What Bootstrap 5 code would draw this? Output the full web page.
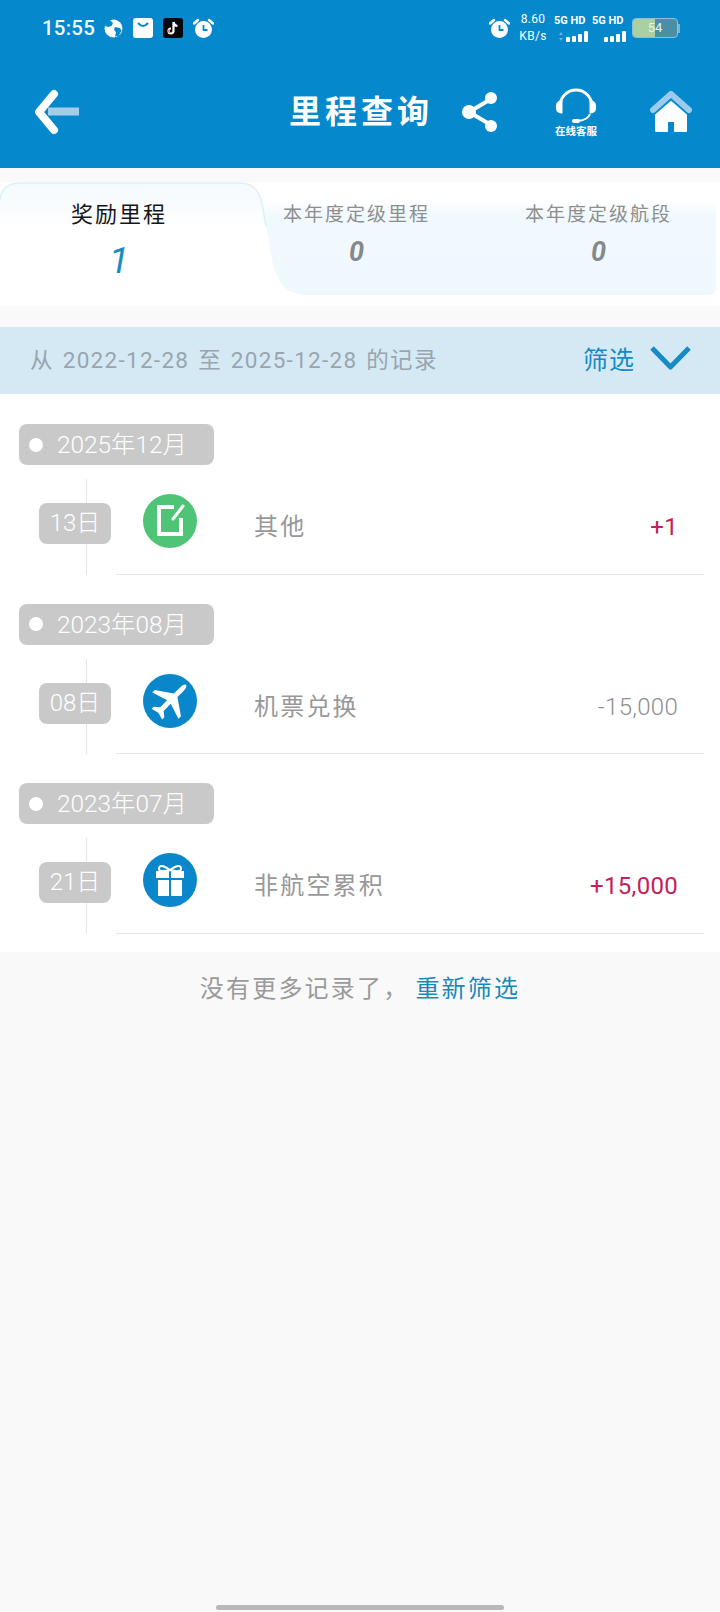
<!DOCTYPE html>
<html lang="zh-CN">
<head>
  <meta charset="UTF-8">
  <meta name="viewport" content="width=device-width, initial-scale=1.0">
  <title>里程查询</title>
  <link href="https://cdn.jsdelivr.net/npm/bootstrap@5.3.0/dist/css/bootstrap.min.css" rel="stylesheet">
  <style>
    body { background: #f9f9f9; font-family: Roboto, "Noto Sans CJK SC", sans-serif; color: #999; }
    .page-wrap { min-height: 1612px; }

    /* 顶部 */
    .top-head { background: #0588cc; height: 168px; color: #fff; }
    .status-row { height: 56px; padding: 0 40px 0 42px; }
    .clock-txt { font-size: 20.5px; font-weight: 500; letter-spacing: .2px; line-height: 1; opacity: .95; margin-right: 9px; }
    .app-gap { margin-left: 10px; }
    .alarm-r { margin-right: -2px; }
    .net-speed { font-size: 12px; line-height: 17px; width: 30px; margin: 0 6px 0 10px; text-align: center; letter-spacing: .3px; }
    .sig-txt { font-size: 11px; font-weight: 700; line-height: 12px; white-space: nowrap; }
    .batt-box { width: 46px; height: 20px; border: 1px solid #8cc0dc; border-radius: 4px; background: #4b8fa6; overflow: hidden; margin-left: 6px; }
    .batt-fill { height: 100%; background: #a9cfa2; }
    .batt-num { font-size: 13px; line-height: 18px; color: #e8f3ee; left: 0; right: 0; top: 0; text-align: center; }
    .batt-nub { width: 2px; height: 9px; background: #7cb3d0; }
    .tool-row { height: 112px; padding: 0 28px 0 34px; }
    .page-title { font-size: 32px; font-weight: 700; letter-spacing: 4px; line-height: 1; margin-left: 209px; }
    .share-ico { margin-left: 28px; }
    .kefu-box { margin-left: 56px; }
    .kefu-txt { font-size: 10.5px; font-weight: 700; line-height: 11px; white-space: nowrap; margin-top: 2px; }

    /* 三个 tab */
    .tab-strip { margin-top: 14px; background: #fff; height: 124px; }
    .tab-strip-bg { left: 0; top: 0; }
    .tab-a { width: 238px; }
    .tab-b { width: 237px; }
    .tab-c { width: 245px; padding-left: 2px; }
    .tab-name { font-size: 19px; letter-spacing: 2px; line-height: 26px; color: #8e8e8e; padding-top: 20px; }
    .tab-num { font-size: 27px; font-style: italic; font-weight: 700; line-height: 34px; color: #85898c; margin-top: 7px; }
    .tab-a .tab-name { font-size: 22px; color: #161616; }
    .tab-a .tab-num { font-size: 37px; font-weight: 400; color: #178cc4; line-height: 42px; margin-top: 12px; }

    /* 筛选条 */
    .filter-bar { margin-top: 21px; height: 67px; background: #d5e9f5; padding: 0 29px 0 30px; }
    .range-txt { font-size: 22.5px; color: #98a5ad; letter-spacing: 1.3px; word-spacing: 2px; }
    .filter-btn { font-size: 25px; color: #178cc4; letter-spacing: 1px; text-decoration: none; margin-right: 15px; }
    .filter-arrow { margin-bottom: 6px; }

    /* 记录 */
    .rec-list { background: #fff; padding: 30px 16px 18px 19px; }
    .month-tag { width: 195px; height: 41px; background: #c9c9c9; border-radius: 8px; color: #fff; font-size: 24.4px; line-height: 41px; font-weight: 300; padding-left: 10px; margin-top: 29px; }
    .month-tag:first-child { margin-top: 0; }
    .month-dot { width: 14px; height: 14px; border-radius: 50%; background: #fff; margin-right: 14px; }
    .rec-row { height: 95.5px; margin: 14px 0 0 97px; border-bottom: 1px solid #e6e6e6; padding-right: 26px; }
    .rec-line { left: -30px; top: 0; bottom: -1px; width: 1px; background: #e6e6e6; }
    .day-tag { width: 72px; height: 41px; background: #c9c9c9; border-radius: 8px; color: #fff; font-size: 24px; font-weight: 300; line-height: 41px; text-align: center; margin: 24px 0 0 -77px; z-index: 1; }
    .rec-icon { width: 54px; height: 54px; margin: 15px 0 0 32px; }
    .rec-name { font-size: 24px; letter-spacing: 2.2px; color: #989898; margin: 30px 0 0 57px; line-height: 36px; }
    .rec-amt { font-size: 24px; font-weight: 300; color: #8f8f8f; letter-spacing: .3px; margin: 30px 0 0 auto; line-height: 36px; }
    .rec-amt.plus { color: #c2215a; font-weight: 400; }

    .end-note { font-size: 24px; letter-spacing: 2.2px; line-height: 34px; margin-top: 20px; color: #9a9a9a; }
    .end-note a { color: #178ab8; text-decoration: none; margin-left: 6px; }
    .home-bar { width: 288px; height: 5px; background: #b9b9b9; border-radius: 3px; margin: auto auto 2px; }
  </style>
</head>
<body>
  <div class="page-wrap d-flex flex-column">

    <div class="top-head">
      <div class="status-row d-flex align-items-center">
        <span class="clock-txt">15:55</span>
        <svg width="19" height="19" viewBox="0 0 19 19"><circle cx="9.5" cy="9.5" r="9" fill="#fff"/><path d="M6 1 9 4 7.500 7 4 8 1 7 2 3zM11 8l5 1 1.500 3-3 5-3.500 .5 1-4-2-3z" fill="#0588cc"/></svg>
        <svg class="app-gap" width="20" height="20" viewBox="0 0 20 20"><rect width="20" height="20" rx="3" fill="#fff"/><path d="M5.500 5.500q4.500 5 9 0" fill="none" stroke="#0588cc" stroke-width="2" stroke-linecap="round"/></svg>
        <svg class="app-gap" width="20" height="20" viewBox="0 0 20 20"><rect width="20" height="20" rx="3" fill="#06060c"/><path d="M10.500 4v9a2.500 2.500 0 1 1-2.500-2.500M10.500 4q.5 3.500 4 4" fill="none" stroke="#fff" stroke-width="2.200"/><path d="M6.200 11.500a2.500 2.500 0 0 0 .3 3.500" fill="none" stroke="#e8304f" stroke-width="1"/></svg>
        <svg class="app-gap" width="21" height="21" viewBox="0 0 21 21"><circle cx="10.500" cy="11.500" r="8.500" fill="#fff"/><path d="M1 5.500 5 2M20 5.500 16 2" stroke="#fff" stroke-width="2.400" stroke-linecap="round"/><path d="M10.500 7v5h4" fill="none" stroke="#0588cc" stroke-width="1.800"/></svg>

        <svg class="ms-auto alarm-r" width="21" height="21" viewBox="0 0 21 21"><circle cx="10.500" cy="11.500" r="8.500" fill="#fff"/><path d="M1 5.500 5 2M20 5.500 16 2" stroke="#fff" stroke-width="2.400" stroke-linecap="round"/><path d="M10.500 7v5h4" fill="none" stroke="#0588cc" stroke-width="1.800"/></svg>
        <div class="net-speed">8.60<br>KB/s</div>
        <div class="me-1">
          <div class="sig-txt">5G HD</div>
          <svg class="d-block mt-1 ms-1" width="30" height="11" viewBox="0 0 30 11"><g fill="#fff"><rect x="8" y="6" width="4" height="5" rx="1"/><rect x="14" y="5" width="4" height="6" rx="1"/><rect x="20" y="3" width="4" height="8" rx="1"/><rect x="26" y="0" width="4" height="11" rx="1"/></g><path d="M3 1 5 4H1zM3 10 5 7H1z" fill="#66b4de"/></svg>
        </div>
        <div>
          <div class="sig-txt">5G HD</div>
          <svg class="d-block mt-1 ms-1" width="30" height="11" viewBox="0 0 30 11"><g fill="#fff"><rect x="8" y="6" width="4" height="5" rx="1"/><rect x="14" y="5" width="4" height="6" rx="1"/><rect x="20" y="3" width="4" height="8" rx="1"/><rect x="26" y="0" width="4" height="11" rx="1"/></g></svg>
        </div>
        <div class="batt-box position-relative">
          <div class="batt-fill w-50"></div>
          <div class="batt-num position-absolute">54</div>
        </div>
        <div class="batt-nub"></div>
      </div>

      <div class="tool-row d-flex align-items-center">
        <svg width="46" height="46" viewBox="0 0 46 46"><rect x="14" y="18.500" width="31" height="8" fill="#a5cde8"/><path d="M20 5 5 23l15 18" fill="none" stroke="#fff" stroke-width="8" stroke-linecap="round" stroke-linejoin="round"/></svg>
        <div class="page-title">里程查询</div>
        <svg class="share-ico" width="38" height="42" viewBox="0 0 38 42"><path d="M30 8 8 21l22 13" fill="none" stroke="#fff" stroke-width="4"/><circle cx="30" cy="7" r="6" fill="#fff"/><circle cx="8" cy="21" r="7" fill="#fff"/><circle cx="30" cy="35" r="6" fill="#fff"/></svg>
        <div class="kefu-box d-flex flex-column align-items-center">
          <svg width="42" height="36" viewBox="0 0 42 36"><path d="M5 23V18a16 16 0 0 1 32 0v5" fill="none" stroke="#fff" stroke-width="3"/><path d="M6 12.500A5 5 0 0 0 1 17.500v3a5 5 0 0 0 5 5h1.500V12.500zM36 12.500a5 5 0 0 1 5 5v3a5 5 0 0 1-5 5h-1.500V12.500z" fill="#fff"/><path d="M35 26q-2 6-12 7" fill="none" stroke="#fff" stroke-width="2"/><rect x="17" y="31" width="8" height="4" rx="2" fill="#fff"/></svg>
          <div class="kefu-txt">在线客服</div>
        </div>
        <svg class="ms-auto" width="42" height="42" viewBox="0 0 42 42"><path d="M3 19 21 3l18 16" fill="none" stroke="#9ccbeb" stroke-width="6" stroke-linecap="round" stroke-linejoin="round"/><path d="M21 11 6 24v16h11V30h8v10h11V24z" fill="#fff" stroke="#fff" stroke-width="2" stroke-linejoin="round"/></svg>
      </div>
    </div>

    <div class="tab-strip d-flex position-relative">
      <svg class="tab-strip-bg position-absolute" width="720" height="124" viewBox="0 0 720 124">
        <defs>
          <linearGradient id="paleFade" x1="0" y1="0" x2="0" y2="1"><stop offset="0" stop-color="#ffffff"/><stop offset=".2" stop-color="#f0f9fe"/><stop offset="1" stop-color="#eff8fd"/></linearGradient>
          <linearGradient id="tabFade" x1="0" y1="0" x2="0" y2="1"><stop offset="0" stop-color="#f4fafe"/><stop offset=".4" stop-color="#ffffff"/></linearGradient>
        </defs>
        <path d="M250 16H708q8 0 8 8v81q0 8-8 8H306q-26 0-33-30z" fill="url(#paleFade)"/>
        <path d="M0 124V18Q2 1 20 1H240Q258 1 262 22L273 83Q280 113 306 113L320 124z" fill="url(#tabFade)"/>
        <path d="M0 18Q2 1 20 1H240Q258 1 262 22L266 44" fill="none" stroke="#deeff8" stroke-width="1.500"/>
      </svg>
      <div class="tab-a text-center position-relative">
        <div class="tab-name">奖励里程</div>
        <div class="tab-num">1</div>
      </div>
      <div class="tab-b text-center position-relative">
        <div class="tab-name">本年度定级里程</div>
        <div class="tab-num">0</div>
      </div>
      <div class="tab-c text-center position-relative">
        <div class="tab-name">本年度定级航段</div>
        <div class="tab-num">0</div>
      </div>
    </div>

    <div class="filter-bar d-flex align-items-center">
      <span class="range-txt">从 2022-12-28 至 2025-12-28 的记录</span>
      <a class="filter-btn ms-auto" href="#">筛选</a>
      <svg class="filter-arrow" width="41" height="26" viewBox="0 0 41 26"><path d="M2 3 20.500 22 39 3" fill="none" stroke="#178cc4" stroke-width="5" stroke-linejoin="round"/></svg>
    </div>

    <div class="rec-list">
      <div class="month-tag d-flex align-items-center"><span class="month-dot"></span>2025年12月</div>
      <div class="rec-row d-flex position-relative">
        <div class="rec-line position-absolute"></div>
        <div class="day-tag flex-shrink-0">13日</div>
        <svg class="rec-icon flex-shrink-0" viewBox="0 0 54 54"><circle cx="27" cy="27" r="27" fill="#4fc476"/><path d="M31 13H16v27h22V24" fill="none" stroke="#fff" stroke-width="4"/><path d="M30 25 40 12" stroke="#fff" stroke-width="3" stroke-linecap="round"/></svg>
        <span class="rec-name">其他</span>
        <span class="rec-amt plus">+1</span>
      </div>

      <div class="month-tag d-flex align-items-center"><span class="month-dot"></span>2023年08月</div>
      <div class="rec-row d-flex position-relative">
        <div class="rec-line position-absolute"></div>
        <div class="day-tag flex-shrink-0">08日</div>
        <svg class="rec-icon flex-shrink-0" viewBox="0 0 54 54"><circle cx="27" cy="27" r="27" fill="#0a86cb"/><g transform="rotate(45 27 27)"><path d="M27 4q2.500 1 2.500 7v8l16 11v3.500l-16-5v10l5 4v3l-7.500-2-7.500 2v-3l5-4v-10l-16 5V30l16-11v-8q0-6 2.500-7z" fill="#fff"/></g></svg>
        <span class="rec-name">机票兑换</span>
        <span class="rec-amt">-15,000</span>
      </div>

      <div class="month-tag d-flex align-items-center"><span class="month-dot"></span>2023年07月</div>
      <div class="rec-row d-flex position-relative">
        <div class="rec-line position-absolute"></div>
        <div class="day-tag flex-shrink-0">21日</div>
        <svg class="rec-icon flex-shrink-0" viewBox="0 0 54 54"><circle cx="27" cy="27" r="27" fill="#0a86cb"/><g fill="#fff"><rect x="13" y="18" width="13" height="7"/><rect x="28" y="18" width="13" height="7"/><rect x="15" y="27" width="11" height="16"/><rect x="28" y="27" width="11" height="16"/></g><path d="M27 17q-10-7-11-2t11 2q10-7 11-2t-11 2" fill="none" stroke="#fff" stroke-width="2"/></svg>
        <span class="rec-name">非航空累积</span>
        <span class="rec-amt plus">+15,000</span>
      </div>
    </div>

    <div class="end-note text-center">没有更多记录了，<a href="#">重新筛选</a></div>
    <div class="home-bar"></div>
  </div>
  <script src="https://cdn.jsdelivr.net/npm/bootstrap@5.3.0/dist/js/bootstrap.bundle.min.js"></script>
</body>
</html>
